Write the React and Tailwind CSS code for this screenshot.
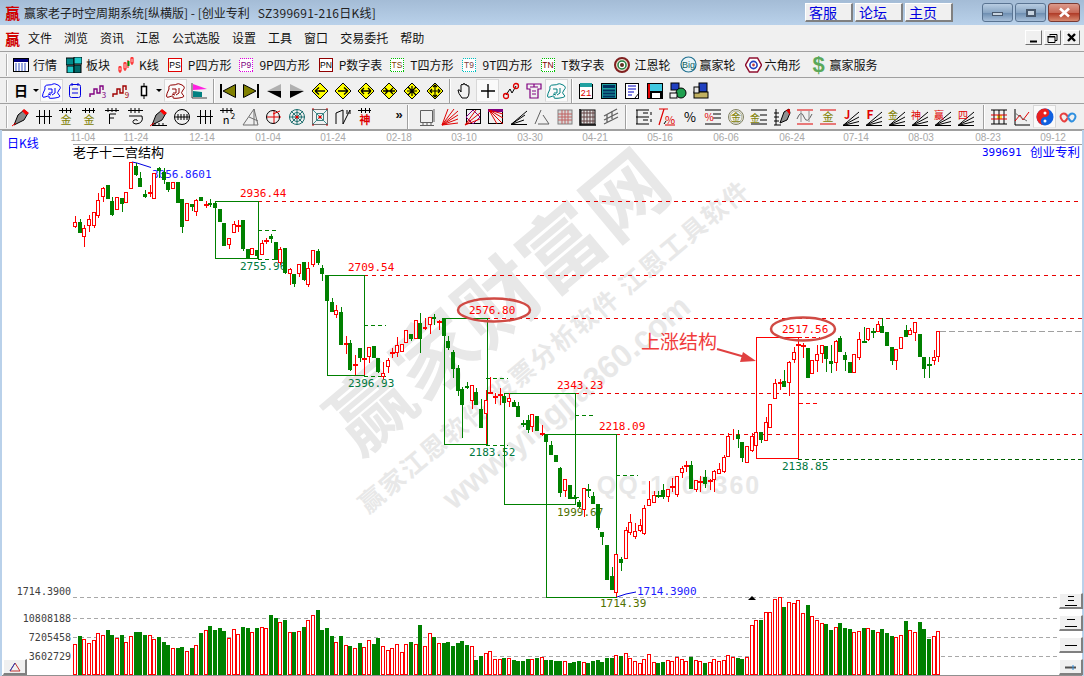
import React from "react";

const C = [
[222,227,216,228,0],[222,233,219,233,1],[228,237,225,247,0],[219,226,215,232,0],[212,226,212,228,0],[200,216,193,218,0],[188,197,187,202,0],[185,199,185,199,1],[201,215,197,216,1],[197,210,197,210,0],
[198,204,198,212,1],[192,203,192,203,0],[162,189,162,189,0],[166,175,163,176,1],[178,187,172,187,1],[194,197,190,198,1],[192,194,185,197,0],[173,199,173,199,0],[168,171,167,178,1],[172,180,168,184,1],
[182,190,182,192,1],[182,189,182,189,0],[182,203,182,203,1],[199,227,199,233,1],[203,221,203,221,0],[204,207,204,211,1],[200,212,199,216,0],[197,201,197,201,1],[204,204,201,208,0],[203,205,199,207,1],
[203,208,203,208,1],[209,222,209,222,1],[223,246,223,246,1],[238,245,238,249,0],[224,233,221,233,0],[225,225,220,232,0],[220,249,220,251,1],[249,258,249,258,1],[248,255,248,255,0],[250,256,250,259,1],
[243,255,240,255,0],[240,240,238,244,0],[236,239,234,243,1],[242,260,242,260,1],[249,263,247,265,0],[248,273,248,274,1],[269,274,268,285,0],[274,284,274,287,1],[264,274,264,277,0],[262,280,262,281,1],
[268,285,262,287,0],[250,265,250,267,0],[251,263,249,265,1],[268,274,265,281,1],[275,301,275,301,1],[302,312,298,312,1],[310,315,305,318,0],[312,345,307,345,1],[343,343,336,354,0],[343,370,340,371,1],
[364,364,355,375,0],[348,358,348,362,1],[358,358,358,375,0],[347,357,347,363,0],[346,358,346,358,1],[358,372,358,373,1],[373,377,362,379,0],[360,367,358,373,0],[352,352,348,358,0],[345,353,337,357,0],
[344,352,344,352,0],[330,343,330,343,0],[334,339,334,341,1],[320,339,320,339,0],[323,339,313,353,1],[327,329,318,330,0],[317,325,317,334,0],[317,319,314,325,1],[321,321,320,330,0],[318,336,318,336,1],
[341,348,336,350,1],[352,369,350,378,1],[368,391,365,396,1],[389,405,387,438,1],[386,388,382,389,1],[385,401,385,409,0],[392,405,388,405,1],[409,428,399,428,1],[400,414,390,444,0],[392,392,377,393,0],
[396,396,393,404,0],[394,394,388,405,0],[396,403,393,403,1],[398,402,393,407,0],[402,407,400,407,1],[406,417,402,417,1],[423,423,420,427,1],[420,430,415,433,1],[414,427,414,432,0],[416,431,416,431,1],
[433,433,425,436,0],[434,442,434,442,1],[445,455,441,455,1],[455,462,455,462,1],[468,493,467,497,1],[479,491,479,497,0],[485,499,485,499,1],[497,497,495,499,1],[502,507,500,508,1],[488,510,488,517,0],
[489,489,484,497,1],[496,504,492,504,1],[504,528,504,530,1],[532,537,532,545,1],[545,580,545,580,1],[576,590,567,590,1],[554,593,554,597,0],[559,563,557,571,1],[530,559,527,559,0],[522,533,514,535,0],
[531,537,523,539,0],[525,531,519,532,0],[508,534,505,535,0],[499,506,481,506,0],[495,503,491,503,0],[495,495,491,498,1],[490,497,484,499,1],[489,497,489,502,0],[486,486,478,492,0],[476,495,476,497,0],
[468,473,466,478,0],[465,465,461,472,0],[465,489,461,489,1],[480,490,480,492,0],[481,481,476,492,0],[477,484,470,488,1],[480,480,479,490,0],[471,480,470,492,0],[469,474,463,474,0],[457,472,455,473,0],
[436,457,433,457,0],[434,435,429,440,0],[435,439,430,448,1],[442,458,442,462,1],[446,463,446,463,0],[436,451,433,452,0],[432,446,432,446,0],[432,440,432,443,1],[422,441,417,441,0],[404,428,404,428,0],
[383,399,379,399,0],[382,382,379,390,0],[381,387,370,387,1],[362,383,361,396,0],[352,360,347,363,0],[344,344,338,347,0],[345,345,343,358,0],[348,378,348,378,1],[360,374,360,374,0],[354,361,345,372,0],
[345,354,345,363,0],[346,359,346,372,1],[361,364,345,373,1],[341,363,340,371,0],[338,352,336,352,1],[355,360,352,371,1],[362,373,362,373,1],[354,373,354,373,0],[339,358,332,360,0],[341,341,327,343,1],
[328,340,328,341,0],[331,331,328,338,1],[324,332,321,332,0],[326,333,318,333,1],[332,346,332,346,1],[347,361,347,365,1],[349,361,349,370,0],[337,349,337,349,0],[330,337,325,337,1],[330,335,328,335,0],
[322,333,322,341,0],[334,357,334,357,1],[357,369,357,378,1],[364,364,357,378,1],[357,361,350,365,0],[331,357,331,362,0],
];
const V1 = [192,168,178,190,180,160,165,150,165,174,165,186,168,156,156,165,165,178,171,186,195,204,204,201,213,204,195,159,150,138,150,144,153,174,147,162,141,144,156,144,141,144,105,114,126,120,156,156,153].map(z=>580+z/3);
const V2 = [126,105,90,75,135,129,153,171,153,180,183,189,174,186,165,177,159,183,195,189,177,201,177,171,177,120,183,144,156,174,174,171,183,174,168,180,183,225,213,204,198,222,222,219,219,225,228,228,222,222,219,216,225,225,228,228,228,234,231,228,231,234,228,225,231,219,219,210,213,204,219,228,234,222,207,231,234,231,225,228,216,222,228,216,225,228,234,231,222,228,225,210].map(z=>585+z/3);
const V3 = [232,234,237,232,135,120,120,97,97,57,52,81,67,70,61,100,75,109,120,130,132,150,141,129,144,147,156,153,144,144,150,156,147,159,168,172,165,123,150,156,126,147,177,168,153].map(z=>580+z/3);
const VOL = [...V1,...V2,...V3].map(Math.round);
const cx = i => 75 + Math.round(i*14/3);
const RED="#ff0000", GRN="#008000";
const MONO="'DejaVu Sans Mono',monospace";

const Ic = ({children}) => (
  <svg width="20" height="20" viewBox="0 0 20 20" fill="none" stroke="none" className="block overflow-visible">{children}</svg>
);
const K = ({d,c="#000",w=1}) => <path d={d} stroke={c} strokeWidth={w} fill="none" />;
const F = ({d,c="#000",s}) => <path d={d} fill={c} stroke={s||"none"} strokeWidth="1" />;
const T = ({x,y,s=10,c="#000",b,children}) => <text x={x} y={y} fontSize={s} fill={c} fontWeight={b?700:400} fontFamily="'Noto Sans CJK SC',sans-serif" textAnchor="middle">{children}</text>;
const Mono = ({x,y,s=8,c="#000",children}) => <text x={x} y={y} fontSize={s} fill={c} fontFamily="'Liberation Mono',monospace" textAnchor="middle">{children}</text>;
const Slot = ({sel,children}) => <div className={sel?"w-[23px] h-[23px] flex-none flex items-center justify-center bg-[#fafafa] border border-[#d8d8d8] border-b-[#e8e8e8]":"w-[23px] h-[23px] flex-none flex items-center justify-center"}><Ic>{children}</Ic></div>;
const Grip = () => <div className="w-[2px] h-[22px] flex-none bg-[#b0b0b0] border-r border-white"></div>;
const Sep = () => <div className="w-[2px] h-[24px] flex-none bg-[#a0a0a0] border-r border-white"></div>;
const Drop = () => <div className="w-[8px] flex-none flex justify-center"><div className="w-0 h-0 border-x-[3px] border-x-transparent border-t-[3px] border-t-black"></div></div>;

const Top4 = <K d="M2 3.5h13M5.5 1v5M9.5 1v5M13.5 1v5" />;
const Fan = <K d="M2 18.5L18 5M2 18.5L18 10M2 18.5L18 14.5M2 18.5H18" />;
const Pencil = <g><F d="M3 18L7 8L13 3L17 6L13 13Z" c="#888" s="#000"/><F d="M13 2L18 6L15 8L11 4Z" c="#f00"/><K d="M1 19L5 16" c="#f00"/></g>;
const Maze = (c) => <g><K c={c} d="M3 8Q2 4 6 4T11 3T16 4T17 9T17 14T13 17T7 16T3 16T3 8ZM6 8h4v4h-3M13 7v5l-3 2M6 13l3 1" /></g>;
const Dia = ({children}) => <g><F d="M10 2L18 10L10 18L2 10Z" c="#ffff00" s="#000"/>{children}</g>;

function Row1Icon({k}) {
  if (k==="hq") return <svg width="16" height="16" viewBox="0 0 16 16"><rect x="0.5" y="1.5" width="15" height="13" fill="#fff" stroke="#000"/><rect x="1" y="2" width="14" height="3" fill="#000080"/><path d="M2 7h12M2 9h12M2 11h12M2 13h12" stroke="#3050c0" strokeDasharray="2 1"/></svg>;
  if (k==="bk") return <svg width="16" height="16" viewBox="0 0 16 16"><rect x="0" y="1" width="8" height="7" fill="#008888" stroke="#000"/><rect x="8" y="0" width="8" height="7" fill="#20c8c8" stroke="#000"/><rect x="1" y="9" width="7" height="7" fill="#20c8c8" stroke="#000"/><rect x="8" y="8" width="7" height="8" fill="#006868" stroke="#000"/></svg>;
  if (k==="kl") return <svg width="16" height="16" viewBox="0 0 16 16"><path d="M2 9v7M7 5v9M10 3v8M14 0v8" stroke="#f00"/><rect x="1" y="10" width="2" height="4" fill="#fff" stroke="#f00"/><rect x="6" y="6" width="2" height="6" fill="#fff" stroke="#f00"/><rect x="9.5" y="4" width="2" height="5" fill="#080"/><rect x="13" y="1" width="2" height="5" fill="#fff" stroke="#f00"/></svg>;
  const box = {ps:["PS","#e00000",0,"#000"],p9:["P9","#e000e0",2,"#800080"],pn:["PN","#900000",0,"#000"],ts:["TS","#00c000",2,"#804000"],t9:["T9","#00c0c0",2,"#804040"],tn:["TN","#00c000",2,"#800000"]}[k];
  if (box) return <svg width="14" height="14" viewBox="0 0 14 14" className="overflow-visible"><rect x="0.5" y="0.5" width="13" height="13" fill="#fff" stroke={box[1]} strokeDasharray={box[2]?"1 1":undefined} shapeRendering="crispEdges"/><text x="7" y="10" fontSize="8.5" textAnchor="middle" fill={box[3]} fontFamily="'Liberation Sans',sans-serif">{box[0]}</text></svg>;
  if (k==="ge") return <svg width="16" height="16" viewBox="0 0 16 16"><circle cx="8" cy="8" r="7" fill="#e8e0d0" stroke="#802020" strokeWidth="2"/><circle cx="8" cy="8" r="4" fill="#fff" stroke="#208040" strokeWidth="1.5"/><circle cx="8" cy="8" r="2" fill="#603020"/></svg>;
  if (k==="big") return <svg width="17" height="17" viewBox="0 0 17 17" className="overflow-visible"><circle cx="8.5" cy="8.5" r="7.5" fill="#e8f4f8" stroke="#207090" strokeWidth="1.2"/><text x="8.5" y="12" fontSize="9" textAnchor="middle" fill="#106060" fontFamily="'Liberation Sans',sans-serif">Big</text></svg>;
  if (k==="hex") return <svg width="17" height="16" viewBox="0 0 17 16"><path d="M4.5 1h8l4 7l-4 7h-8l-4-7z" fill="#fff" stroke="#901030" strokeWidth="1.5"/><circle cx="8.5" cy="8" r="3.6" fill="#fff" stroke="#2040c0" strokeWidth="1.6"/><circle cx="8.5" cy="8" r="1.4" fill="#c04040"/></svg>;
  return null;
}

const Tb = ({k,t,cls,tc}) => (
  <div className={cls}>
    <Row1Icon k={k}/>
    <span className={tc}>{t}</span>
  </div>
);

const Bevel = ({cls,children}) => <div className={"absolute bg-[#f0f0f0] border border-white border-b-2 border-r-2 border-b-[#808080] border-r-[#808080] flex items-center justify-center "+cls}>{children}</div>;

function Chart() {
  const dates = [["11-04",83],["11-24",136],["12-14",202],["01-04",268],["01-24",333],["02-18",399],["03-10",464],["03-30",530],["04-21",595],["05-16",660],["06-06",726],["06-24",792],["07-14",856],["08-03",921],["08-23",988],["09-12",1053]];
  const labels = [
    ["2936.44",240,193,RED],["2755.96",240,266,"#007840"],["2709.54",348,267,RED],["2396.93",348,383,"#007840"],["2576.80",469,310,RED],["2183.52",469,452,"#007840"],
    ["2343.23",557,385,RED],["2218.09",599,426,RED],["1999.67",557,512,"#507000"],["1714.39",600,603,"#507000"],["2517.56",782,329,RED],["2138.85",782,466,"#007840"],
  ];
  const redD = [[258,201],[364,275],[486,318],[575,393],[616,434]];
  const gD = [[258,279,230],[258,279,259],[364,386,325],[364,386,376],[486,508,378],[486,508,445],[575,596,415],[575,590,497],[616,638,475]];
  const boxes = [[215,201,43,57],[327,275,37,100],[444,318,43,126],[504,393,71,111],[546,434,70,163]];
  return (
    <svg viewBox="0 130 1084 546" width="1084" height="546" className="block">
      <rect x="0" y="130" width="1084" height="546" fill="#fff"/>
      <g shapeRendering="crispEdges">
        <rect x="0" y="130" width="1084" height="1" fill="#a0a0a0"/>
        <rect x="73" y="144" width="1011" height="1" fill="#a0a0a0"/>
        <rect x="0" y="675" width="1084" height="1" fill="#909090"/>
        <rect x="0" y="130" width="2" height="546" fill="#b9d1ea"/>
        <rect x="1082" y="130" width="2" height="546" fill="#b9d1ea"/>
      </g>
      {dates.map(([d,x])=><text key={d} x={x} y="141" fontSize="10" textAnchor="middle" fill="#a8a8a8" fontFamily="'Liberation Sans',sans-serif">{d}</text>)}

      <g fill="#e8e8e8" fontWeight="700">
        <text x="0" y="0" fontSize="82" letterSpacing="1" textAnchor="middle" dominantBaseline="central" fontFamily="'Noto Sans CJK SC',sans-serif" transform="translate(495,297) rotate(-40)">赢家财富网</text>
        <text x="0" y="0" fontSize="25" letterSpacing="2" textAnchor="middle" dominantBaseline="central" fontFamily="'Noto Sans CJK SC',sans-serif" transform="translate(553,345) rotate(-40)">赢家江恩软件 股票分析软件 江恩工具软件</text>
        <text x="0" y="0" fontSize="32" textAnchor="middle" dominantBaseline="central" fontFamily="'Liberation Sans',sans-serif" transform="translate(566,402) rotate(-40)">www.yingjia360.com</text>
        <text x="679" y="494" fontSize="25" letterSpacing="2" textAnchor="middle" fontFamily="'Liberation Sans',sans-serif">QQ:1008360</text>
      </g>

      <text x="7" y="148" fontSize="12" fill="#0000ff" fontFamily="'Noto Sans CJK SC',sans-serif">日K线</text>
      <text x="73" y="157" fontSize="13" fill="#000" fontFamily="'Noto Sans CJK SC',sans-serif">老子十二宫结构</text>
      <text x="982" y="156" fontSize="11" fill="#0000ff" fontFamily={MONO}>399691</text>
      <text x="1030" y="157" fontSize="12.5" fill="#0000ff" fontFamily="'Noto Sans CJK SC',sans-serif">创业专利</text>

      <g shapeRendering="crispEdges">
        {[597,618,637,656].map(y=><path key={y} d={`M73 ${y+.5}H1058`} stroke="#a8a8a8" strokeDasharray="4 3"/>)}
        {redD.map(([x,y])=><path key={y} d={`M${x} ${y+.5}H1082`} stroke="#e80000" strokeDasharray="4 4"/>)}
        <path d="M798 459.5H1082" stroke="#006000" strokeDasharray="4 3"/>
        <path d="M940 331.5H1082" stroke="#a0a0a0" strokeDasharray="6 3"/>
        {gD.map(([a,b,y],i)=><path key={i} d={`M${a} ${y+.5}H${b}`} stroke="#008000" strokeDasharray="4 3"/>)}
        <path d="M798 337.5H820M799 403.5H820" stroke={RED} strokeDasharray="4 3"/>
      </g>

      {labels.map(([t,x,y,c])=><text key={t} x={x} y={y+4} fontSize="11" fill={c} fontFamily={MONO}>{t}</text>)}
      <text x="152" y="178" fontSize="11" fill="#2020ff" fontFamily={MONO}>3056.8601</text>
      <text x="637" y="595" fontSize="11" fill="#2020ff" fontFamily={MONO}>1714.3900</text>
      <path d="M132 162L137 163L151 167.5" stroke="#0000e0" fill="none"/>
      <path d="M617 597L626 594L636 592" stroke="#0000e0" fill="none"/>
      <text x="71" y="595" fontSize="10" textAnchor="end" fill="#404040" fontFamily={MONO}>1714.3900</text>
      <text x="71" y="622" fontSize="10" textAnchor="end" fill="#404040" fontFamily={MONO}>10808188</text>
      <text x="71" y="641" fontSize="10" textAnchor="end" fill="#404040" fontFamily={MONO}>7205458</text>
      <text x="71" y="660" fontSize="10" textAnchor="end" fill="#404040" fontFamily={MONO}>3602729</text>

      <g shapeRendering="crispEdges">
        {boxes.map(([x,y,w,h],i)=><rect key={i} x={x+.5} y={y+.5} width={w} height={h} fill="none" stroke={GRN}/>)}
        <rect x="756.5" y="337.5" width="42" height="121" fill="none" stroke={RED}/>
        {C.map(([t,b,h,l,g],i)=>{
          const x=cx(i), col=g?GRN:RED;
          const cross=t===b;
          return <g key={i}>
            <rect x={x} y={h} width="1" height={Math.max(l-h,1)} fill={col}/>
            {cross
              ? <rect x={x-2} y={t} width="5" height="2" fill={col}/>
              : g
                ? <rect x={x-2} y={t} width="4" height={b-t} fill={col}/>
                : <rect x={x-1.5} y={t+.5} width="3" height={b-t-1} fill="#fff" stroke={col}/>}
          </g>;
        })}
        {VOL.map((y,i)=>{
          const x=cx(i), g=C[i]?C[i][4]:1;
          return g
            ? <rect key={i} x={x-2} y={y} width="4" height={675-y} fill={GRN}/>
            : <rect key={i} x={x-1.5} y={y+.5} width="3" height={675-y-1} fill="#fff" stroke={RED}/>;
        })}
      </g>
      <path d="M752 596l4 4h-8z" fill="#000"/>

      <ellipse cx="494" cy="310" rx="36" ry="11.5" fill="none" stroke="#d04a44" strokeWidth="2.5"/>
      <ellipse cx="803" cy="329" rx="32" ry="11.5" fill="none" stroke="#d04a44" strokeWidth="2.5"/>
      <text x="641" y="349" fontSize="19" fill="#f03c3c" fontFamily="'Noto Sans CJK SC',sans-serif">上涨结构</text>
      <path d="M717 349L745 357" stroke="#e04040" strokeWidth="2"/>
      <path d="M756 361L743 352L740 362Z" fill="#e04040"/>
    </svg>
  );
}

export default function App() {
  const rowCls = "h-[26px] flex items-center border-b border-[#a0a0a0] bg-[#f0f0f0] overflow-hidden";
  return (
    <div className="w-[1084px] h-[676px] overflow-hidden flex flex-col font-['Noto_Sans_CJK_SC',sans-serif] text-[12px] leading-none text-[#111] bg-[#f0f0f0]">
      {/* title bar */}
      <div className="h-[25px] flex items-center bg-[linear-gradient(180deg,#a4bcd6_0%,#b9d1ea_100%)]">
        <span className="ml-[5px] w-[15px] text-[15px] text-[#d00000] font-bold leading-none">贏</span>
        <span className="ml-[4px] whitespace-pre text-[#222]">赢家老子时空周期系统[纵横版] - [创业专利</span>
        <span className="ml-[8px] whitespace-pre text-[#222] tracking-[0.25px]">SZ399691-216日K线]</span>
        <div className="ml-auto flex items-center">
          <div className="flex gap-[2px] text-[#0000e0] text-[14px] mr-[29px]">
            {["客服","论坛","主页"].map(t=><div key={t} className="w-[48px] h-[19px] bg-[#f0f0f0] border border-white border-b-2 border-r-2 border-b-[#808080] border-r-[#808080] pl-[3px] flex items-center">{t}</div>)}
          </div>
          <div className="flex gap-[2px] mr-[4px]">
            <div className="w-[31px] h-[19px] rounded-[3px] border border-[#5a7492] bg-[linear-gradient(180deg,#b8cde2,#8aa6c4_50%,#6f8fb2_55%,#a8c0da)] flex items-center justify-center"><div className="w-[11px] h-[4px] bg-[#c8d4e0] border border-[#48586c] mt-[3px]"></div></div>
            <div className="w-[31px] h-[19px] rounded-[3px] border border-[#5a7492] bg-[linear-gradient(180deg,#b8cde2,#8aa6c4_50%,#6f8fb2_55%,#a8c0da)] flex items-center justify-center"><div className="w-[10px] h-[8px] bg-[#c8d4e0] border-2 border-[#48586c]"></div></div>
            <div className="w-[32px] h-[19px] rounded-[3px] border border-[#7a3a32] bg-[linear-gradient(180deg,#dc9a8c,#c86a58_50%,#b03c28_55%,#d88a70)] flex items-center justify-center">
              <svg width="13" height="11" viewBox="0 0 13 11"><path d="M2 1.5L11 9.5M11 1.5L2 9.5" stroke="#fff" strokeWidth="2.6"/></svg>
            </div>
          </div>
        </div>
      </div>

      {/* menu */}
      <div className="h-[27px] flex items-center gap-[12px] border-b border-[#a0a0a0] bg-[#f0f0f0] relative">
        <span className="ml-[5px] w-[11px] text-[15px] text-[#d00000] font-bold">贏</span>
        {["文件","浏览","资讯","江恩","公式选股","设置","工具","窗口","交易委托","帮助"].map(t=><span key={t}>{t}</span>)}
        <div className="ml-auto mr-[4px] flex gap-[2px] mb-[1px]">
          {[
            <path key="a" d="M4 10.5h7" stroke="#000" strokeWidth="2"/>,
            <path key="b" d="M5 3.5h7v6h-2M3 5.5h7v6H3zM5 3v1.5M3 5v1h7" stroke="#000" fill="none"/>,
            <path key="c" d="M4 3l7 7M11 3l-7 7" stroke="#000" strokeWidth="2.4"/>
          ].map((p,i)=><div key={i} className="w-[17px] h-[15px] bg-[#f0f0f0] border border-white border-b-[#707070] border-r-[#707070] flex items-center justify-center"><svg width="15" height="13" viewBox="0 0 15 13">{p}</svg></div>)}
        </div>
      </div>

      {/* toolbar 1 */}
      <div className={rowCls}>
        <div className="ml-[6px]"><Grip/></div>
        <div className="ml-[5px] flex items-center text-[12px]">
          <Tb k="hq" t="行情" cls="flex items-center gap-[4px]"/>
          <Tb k="bk" t="板块" cls="ml-[9px] flex items-center gap-[4px]"/>
          <Tb k="kl" t="K线" cls="ml-[8px] flex items-center gap-[5px]"/>
          <Tb k="ps" t="P四方形" cls="ml-[9px] flex items-center gap-[6px]"/>
          <Tb k="p9" t="9P四方形" cls="ml-[8px] flex items-center gap-[6px]"/>
          <Tb k="pn" t="P数字表" cls="ml-[9px] flex items-center gap-[6px]"/>
          <Tb k="ts" t="T四方形" cls="ml-[8px] flex items-center gap-[6px]"/>
          <Tb k="t9" t="9T四方形" cls="ml-[9px] flex items-center gap-[6px]"/>
          <Tb k="tn" t="T数字表" cls="ml-[9px] flex items-center gap-[6px]"/>
          <Tb k="ge" t="江恩轮" cls="ml-[9px] flex items-center gap-[5px]"/>
          <Tb k="big" t="赢家轮" cls="ml-[9px] flex items-center gap-[3px]"/>
          <Tb k="hex" t="六角形" cls="ml-[9px] flex items-center gap-[3px]"/>
          <div className="ml-[11px] flex items-center gap-[4px]"><span className="w-[14px] text-[22px] text-center font-bold text-[#5aa85a] font-['Liberation_Sans']">$</span><span>赢家服务</span></div>
        </div>
      </div>

      {/* toolbar 2 */}
      <div className={rowCls}>
        <div className="ml-[6px]"><Grip/></div>
        <div className="w-[1px] flex-none"></div>
        <Slot><T x={10} y={15} s={14} b>日</T></Slot>
        <Drop/>
        <Slot sel>{Maze("#0000ff")}</Slot>
        <Slot><rect x="4.5" y="3.5" width="11" height="13" rx="2" stroke="#0000e0"/><K c="#0000e0" d="M7 2v3M13 2v3M7 8h6M7 12h6"/></Slot>
        <Slot><K c="#800080" w={1.4} d="M2 16V13H6V8H9V12H12V5H15V9"/><T x={16} y={17} s={8} c="#800080">3</T></Slot>
        <Slot><K c="#a00000" w={1.4} d="M2 16V13H6V8H9V12H12V5H15V9"/><T x={16} y={17} s={8} c="#a00000">9</T></Slot>
        <Slot><K d="M10 2v4M10 14v4"/><rect x="7.5" y="5.5" width="5" height="9" fill="#fff" stroke="#000" strokeWidth="1.5"/></Slot>
        <Drop/>
        <div className="w-[1px] flex-none"></div>
        <Slot sel>{Maze("#900000")}</Slot>
        <Slot><K c="#404040" d="M3 2v15H18"/><F c="#ff20e0" d="M4 3L18 8L4 9Z"/><F c="#008080" d="M4 10L13 11V16H4Z"/></Slot>
        <div className="w-[3px] flex-none"></div><Sep/><div className="w-[1px] flex-none"></div>
        <Slot><rect x="2" y="3" width="2" height="14" fill="#000"/><F c="#808000" s="#000" d="M17.5 3.5V16.5L5 10Z"/></Slot>
        <Slot><rect x="16" y="3" width="2" height="14" fill="#000"/><F c="#808000" s="#000" d="M2.5 3.5V16.5L15 10Z"/></Slot>
        <Slot><F c="#b0b0b0" d="M17 3L3 10H17Z"/><F c="#000" d="M3 10H17V17Z"/></Slot>
        <Slot><F c="#b0b0b0" d="M3 3L17 10H3Z"/><F c="#000" d="M17 10H3V17Z"/></Slot>
        <Slot><Dia><K d="M5 10H15M5 10L9 6.5M5 10L9 13.5" w={1.3}/></Dia></Slot>
        <Slot><Dia><K d="M5 10H15M15 10L11 6.5M15 10L11 13.5" w={1.3}/></Dia></Slot>
        <Slot><Dia><K d="M5 10H15M5 10L8 7M5 10L8 13M15 10L12 7M15 10L12 13" w={1.3}/></Dia></Slot>
        <Slot><Dia><K d="M4 10H16M9 10L6 7M9 10L6 13M11 10L14 7M11 10L14 13" w={1.3}/></Dia></Slot>
        <Slot><Dia><K d="M5 10H15M10 5V15M6 6L14 14M14 6L6 14" w={1.2}/></Dia></Slot>
        <Slot><Dia><K d="M5 10H15M10 4V16M8 6L10 4L12 6M8 14L10 16L12 14M7 8L5 10L7 12M13 8L15 10L13 12" w={1.1}/></Dia></Slot>
        <div className="w-[3px] flex-none"></div><Sep/><div className="w-[2px] flex-none"></div>
        <Slot><K d="M7 17Q3 12 3 9Q5 8 6 11L6 4Q7 2.5 8 4V3Q9 2 10 3V4Q11 3 12 4V5Q14 4 14 6V12Q14 15 12 17Z" c="#000"/></Slot>
        <Slot sel><K d="M10 3V17M3 10H17" w={1.4}/></Slot>
        <Slot><K d="M5 14L9 8L11 12L15 5" /><circle cx="5" cy="15" r="2.5" stroke="#e00000" strokeWidth="1.3"/><circle cx="15" cy="5" r="2.5" stroke="#e00000" strokeWidth="1.3"/></Slot>
        <Slot><K c="#800080" w={1.2} d="M3 3H17V8H14V17H6V8H3ZM6 6H14M8 10H12M8 13H12M10 3V6"/></Slot>
        <Slot sel>{Maze("#008080")}</Slot>
        <div className="w-[3px] flex-none"></div><Sep/><div className="w-[1px] flex-none"></div>
        <Slot><rect x="3.5" y="3.5" width="13" height="14" fill="#fff" stroke="#000"/><rect x="4" y="2" width="12" height="4" fill="#20a0a0"/><Mono x={10} y={15} s={9} c="#e00000">21</Mono></Slot>
        <Slot><rect x="2.5" y="2.5" width="15" height="15" fill="#20a0a0" stroke="#000"/><rect x="4" y="4" width="12" height="3" fill="#003060"/><K c="#003060" w={1.8} d="M4 9.5H16M4 12.5H16M4 15.5H16" /></Slot>
        <Slot><rect x="3.5" y="2.5" width="13" height="15" fill="#fff" stroke="#000"/><K c="#0000c0" d="M6 5H14M6 8H14M6 11H12M6 14H10"/><K d="M13 17L17 12"/></Slot>
        <Slot><rect x="2" y="2" width="16" height="16" fill="#000"/><rect x="3" y="3" width="2" height="14" fill="#e00000"/><rect x="5" y="3" width="12" height="7" fill="#40c8e0"/><rect x="7" y="12" width="8" height="5" fill="#fff"/></Slot>
        <Slot><rect x="3" y="2" width="8" height="7" fill="#2040c0" stroke="#000"/><circle cx="13" cy="12" r="5" fill="#20a050" stroke="#000"/><rect x="2" y="12" width="7" height="5" fill="#f0f0f0" stroke="#000"/></Slot>
        <Slot><rect x="8" y="2" width="8" height="9" fill="#2040c0" stroke="#000"/><rect x="3" y="11" width="14" height="6" fill="#c0b060" stroke="#000"/><rect x="3" y="6" width="5" height="6" fill="#e8e8e8" stroke="#000"/></Slot>
      </div>

      {/* toolbar 3 */}
      <div className={rowCls}>
        <div className="ml-[6px]"><Grip/></div>
        <div className="w-[1px] flex-none"></div>
        <Slot>{Pencil}</Slot>
        <Slot><K d="M5.5 3V17M10.5 3V17M15.5 3V17M2 9.5H18"/></Slot>
        <Slot>{Top4}<T x={9} y={17} s={11} c="#808000">金</T></Slot>
        <Slot>{Top4}<T x={9} y={17} s={11} c="#808000">金</T></Slot>
        <Slot><K d="M2 3.5H16M5 1V5M9 1V5M13 1V5M6.5 7H13M6.5 7V17M6.5 11H11"/></Slot>
        <Slot><K d="M2 3.5H17M5 1V6M9 1V6M13 1V6M3 9H16M16 9Q18 16 10 17Q5 16 8 13Q12 12 11 14"/></Slot>
        <Slot>{Pencil}<K d="M3 18.5H18M6 16V19M10 16V19M14 16V19"/></Slot>
        <Slot><circle cx="10" cy="10" r="7.5" stroke="#000"/><K d="M3 10H17M6 7V13M9 7V13M12 7V13M15 7V13"/></Slot>
        <Slot><K d="M5.5 3V17M10.5 3V17M15.5 3V17M2 9.5H18"/></Slot>
        <Slot><K d="M2 3.5H15M5 1V6M9 1V6M13 1V6"/><T x={8} y={17} s={11}>n</T><T x={15} y={12} s={8}>2</T></Slot>
        <Slot><K c="#707070" d="M2 18L13 2L17 18ZM13 2V18M8 10L17 14"/></Slot>
        <Slot><K d="M3 10H17" c="#e00000"/><K d="M10 3V17" c="#e00000"/><circle cx="9" cy="10" r="6.5" stroke="#000"/><K d="M9 7L16 4" c="#e00000"/></Slot>
        <Slot><circle cx="10" cy="10" r="7.5" stroke="#207070"/><circle cx="10" cy="10" r="4.5" stroke="#207070"/><K c="#207070" d="M2 10H18M10 2V18M4 4L16 16M16 4L4 16"/><circle cx="10" cy="10" r="1.6" fill="#e00000"/></Slot>
        <Slot><rect x="2.5" y="2.5" width="15" height="15" stroke="#707070"/><rect x="6.5" y="6.5" width="7" height="7" stroke="#408080"/><K c="#409090" d="M2 2L18 18M18 2L2 18"/><circle cx="10" cy="10" r="1.6" fill="#e00000"/><K c="#c00000" d="M2 2h2M16 2h2M2 18h2M16 18h2"/></Slot>
        <Slot><K d="M3 17L3 6L10 3L10 17L17 3" /><K d="M14 3V7M17 3V7"/></Slot>
        <Slot>{Top4}<T x={9} y={17} s={11} c="#e00000" b>神</T></Slot>
        <div className="w-[14px] flex-none"></div>
        <div className="w-[16px] flex-none text-center font-bold text-[13px] mb-[5px] font-['Liberation_Sans']">»</div>
        <Sep/><div className="w-[6px] flex-none"></div>
        <Slot><K c="#606060" d="M3.5 3.5H15.5V15.5H3.5ZM3 18.5H17M6 16V19M10 16V19M14 16V19M17 2V15"/></Slot>
        <Slot><K c="#e00000" d="M2 18L18 4M2 18L18 8M2 18L18 12M2 18L14 2M2 18L8 2M2 18L18 16"/></Slot>
        <Slot><rect x="3.5" y="2.5" width="14" height="14" stroke="#000"/><K c="#800080" d="M3 10L10 3L17 10L10 17Z"/><K c="#e00000" d="M2 18L17 6M2 18L13 3M2 18L17 12"/></Slot>
        <Slot><rect x="2.5" y="2.5" width="14" height="14" stroke="#000"/><rect x="2" y="2" width="15" height="3" fill="#800080"/><K c="#e00000" d="M3 3L17 17M3 3L17 11M3 3L11 17M3 3L17 7"/></Slot>
        <Slot><K d="M2 17.5H18M2 17.5L18 4M2 17.5L16 8M2 17.5L15 13"/></Slot>
        <Slot><K c="#606060" d="M3 17L9 3M6 17H17L11 8"/></Slot>
        <Slot><rect x="3" y="3" width="14" height="14" fill="#d8d8d8" stroke="#808080"/><K c="#c06060" d="M7 3V17M10 3V17M13 3V17M3 7H17M3 10H17M3 13H17"/></Slot>
        <Slot><rect x="3" y="3" width="14" height="14" fill="#e0e0e0" stroke="#000"/><K c="#604040" d="M6 3V17M9 3V17M12 3V17M15 3V17M3 6H17M3 10H17M3 14H17"/><K d="M2 2V18H18" w={1.5}/></Slot>
        <Slot><K c="#606060" w={1.3} d="M3 9L16 2M3 13L17 6M3 17L17 10M6 7V15M11 4V12"/></Slot>
        <div className="w-[3px] flex-none"></div><Sep/><div className="w-[5px] flex-none"></div>
        <Slot><K d="M3 3V17M2 3H15M2 10H15M2 17H15M9 6H14M9 13H14M17 5V8M17 12V15"/></Slot>
        <Slot><K c="#e00000" w={1.2} d="M2 2H11M7 2L2 18M18 18H8M15 2"/><K d="M7 17L9 14" c="#000"/><T x={13} y={17} s={11} c="#e00000">%</T></Slot>
        <Slot><T x={10} y={15} s={13}>%</T></Slot>
        <Slot><K d="M2 3H18M10 7H18M10 11H18M2 17H18"/><T x={6} y={14} s={10} c="#e00000">%</T></Slot>
        <Slot><circle cx="10" cy="10" r="7.5" stroke="#808060"/><circle cx="10" cy="10" r="6" stroke="#b0b090"/><T x={10} y={14} s={10} c="#808000">金</T></Slot>
        <Slot><K d="M2 3H18M11 8H18M11 13H18M2 17H18"/><T x={6} y={15} s={10} c="#808000">金</T></Slot>
        <Slot><K d="M4 2V18M2 6H7M2 10H7M2 14H7M2 18H9"/><F d="M8 16L12 5L17 2L18 6L15 13Z" c="#909090" s="#000"/><F d="M14 3L18 2V8Z" c="#e00000"/></Slot>
        <Slot><K c="#e00000" d="M2 3H18M2 17H18"/><K c="#606060" d="M2 12Q6 2 9 10T17 7"/><K c="#909090" d="M14 4V15M6 4V15"/></Slot>
        <Slot><K c="#e00000" d="M2 3H18M2 17H18"/><T x={10} y={14} s={11} c="#808000">金</T></Slot>
        <Slot>{Fan}<T x={6} y={12} s={11} c="#e00000" b>J</T></Slot>
        <Slot>{Fan}<T x={6} y={12} s={12} c="#e00000" b>F</T></Slot>
        <Slot>{Fan}<T x={6} y={12} s={10} c="#808000">金</T></Slot>
        <Slot>{Fan}<T x={6} y={12} s={10} c="#e00000">神</T></Slot>
        <Slot>{Fan}<T x={6} y={12} s={10} c="#e00000">赢</T></Slot>
        <Slot>{Fan}<T x={7} y={12} s={10} c="#e00000">四</T></Slot>
        <div className="w-[6px] flex-none"></div><Sep/><div className="w-[2px] flex-none"></div>
        <Slot><rect x="8" y="8" width="5" height="4" fill="#ffe040"/><K d="M5 3V17M15 3V17M10 3V17M2 3H18M2 17H18"/><K c="#e00000" d="M2 8H18M2 12H18"/></Slot>
        <Slot><K d="M3 2V18H18"/><K c="#e00000" d="M3 14L8 8L11 13L17 5"/><K c="#707070" d="M3 6L10 11L15 14"/></Slot>
        <Slot sel><circle cx="10" cy="10" r="8.5" fill="#1060e0"/><path d="M10 1.5A8.5 8.5 0 0 1 10 18.5A4.25 4.25 0 0 1 10 10A4.25 4.25 0 0 0 10 1.5Z" fill="#e82020" transform="rotate(180 10 10)"/><circle cx="10" cy="6" r="1.5" fill="#fff"/><circle cx="10" cy="14" r="1.5" fill="#fff"/></Slot>
        <Slot><K c="#e84040" w={2} d="M10 10Q7 5 4 7T4 13T10 10"/><K c="#3090e0" w={2} d="M10 10Q13 5 16 7T16 13T10 10"/></Slot>
      </div>

      {/* chart */}
      <div className="relative flex-1 min-h-0">
        <Chart/>
        <Bevel cls="left-[3px] top-[529px] w-[24px] h-[16px]">
          <svg width="12" height="10" viewBox="0 0 12 10"><path d="M6 1L11 9H1Z" fill="none" stroke="#c03030"/><path d="M6 1L1 9" stroke="#2040c0"/></svg>
        </Bevel>
        <Bevel cls="left-[1059px] top-[463px] w-[24px] h-[16px]"><svg width="14" height="12" viewBox="0 0 14 12"><path d="M4 1.5h6M4 5.5h6M1 10.5h12" stroke="#000" strokeWidth="1"/></svg></Bevel>
        <Bevel cls="left-[1059px] top-[485px] w-[24px] h-[16px]"><svg width="14" height="12" viewBox="0 0 14 12"><path d="M3 2.5h8M1 9.5h12" stroke="#000"/></svg></Bevel>
        <Bevel cls="left-[1059px] top-[507px] w-[24px] h-[16px]"><svg width="14" height="12" viewBox="0 0 14 12"><path d="M1 6.5h12" stroke="#000"/></svg></Bevel>
        <Bevel cls="left-[1059px] top-[529px] w-[24px] h-[16px]"><svg width="14" height="12" viewBox="0 0 14 12"><path d="M1 6.5h11" stroke="#505050" strokeWidth="2"/><path d="M9 4v5" stroke="#3090e0"/></svg></Bevel>
      </div>
    </div>
  );
}
